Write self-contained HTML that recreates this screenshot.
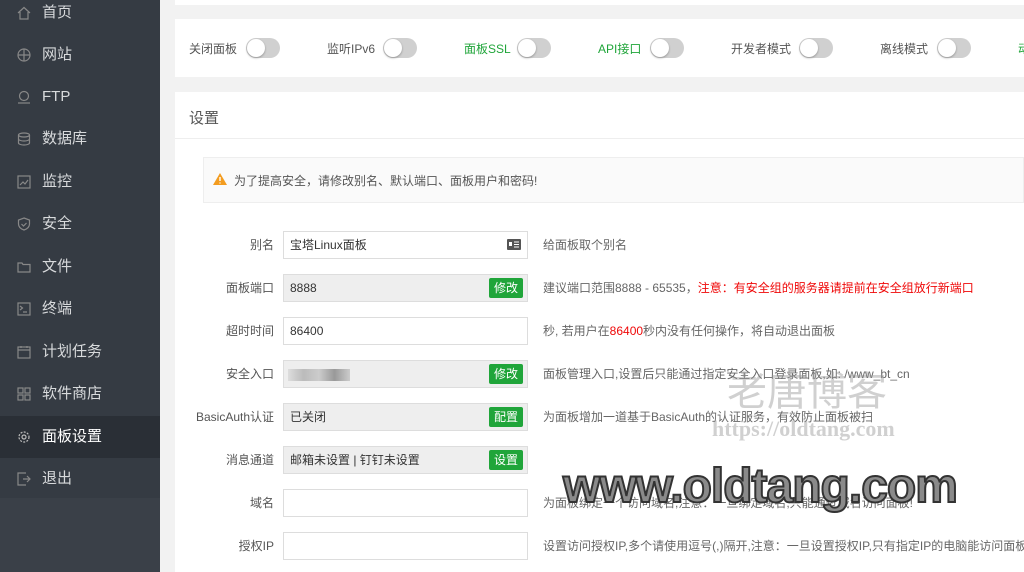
<!DOCTYPE html>
<html><head><meta charset="utf-8"><style>
*{margin:0;padding:0;box-sizing:border-box}
body{width:1024px;height:572px;overflow:hidden;background:#f2f2f2;font-family:"Liberation Sans","Noto Sans CJK SC",sans-serif;position:relative;font-size:12px;color:#555}
.side{position:absolute;left:0;top:0;width:160px;height:572px;background:#3a4048}
.side .menu{background:#353b43;height:498px}
.item{position:absolute;left:0;width:160px;height:42px;color:#d8dadc;font-size:15px;line-height:42px;padding-left:42px}
.item.act{background:#2a2f36;color:#fff}
.item svg{position:absolute;left:17px;top:14px;width:14px;height:14px}
.card{position:absolute;left:175px;right:0;background:#fff}
.tg{position:absolute;top:38px;width:34px;height:20px;border-radius:10px;background:#d0d0d0}
.tg:after{content:"";position:absolute;left:1px;top:1px;width:18px;height:18px;border-radius:50%;background:#fff;box-shadow:0 1px 2px rgba(0,0,0,.3)}
.tl{position:absolute;top:40px;font-size:12px;color:#555}
.g{color:#20a53a}
.lab{position:absolute;right:750px;font-size:12px;color:#555;text-align:right;width:120px}
.inp{position:absolute;left:283px;width:245px;height:28px;border:1px solid #ddd;background:#fff;font-size:12px;line-height:26px;padding-left:6px;color:#333}
.inp.dis{background:#eee}
.btn{position:absolute;right:4px;top:3px;height:20px;width:34px;background:#20a53a;color:#fff;border-radius:2px;font-size:12px;line-height:20px;text-align:center}
.desc{position:absolute;left:543px;font-size:12px;color:#666;white-space:nowrap}
.r{color:#ef0808}
</style></head><body>
<div class="side"><div class="menu"></div>
<div class="item" style="top:-8px">首页<svg viewBox="0 0 14 14" fill="none" stroke="#888" stroke-width="1.2"><path d="M1 7L7 1.5 13 7M3 6v7h8V6"/></svg></div>
<div class="item" style="top:34px">网站<svg viewBox="0 0 14 14" fill="none" stroke="#888" stroke-width="1.2"><circle cx="7" cy="7" r="6"/><path d="M1 7h12M7 1v12"/></svg></div>
<div class="item" style="top:76px">FTP<svg viewBox="0 0 14 14" fill="none" stroke="#888" stroke-width="1.2"><circle cx="7" cy="6" r="4.5"/><path d="M1 13h12"/></svg></div>
<div class="item" style="top:118px">数据库<svg viewBox="0 0 14 14" fill="none" stroke="#888" stroke-width="1.2"><ellipse cx="7" cy="3" rx="5.5" ry="2"/><path d="M1.5 3v8c0 1 2.5 2 5.5 2s5.5-1 5.5-2V3M1.5 7c0 1 2.5 2 5.5 2s5.5-1 5.5-2"/></svg></div>
<div class="item" style="top:161px">监控<svg viewBox="0 0 14 14" fill="none" stroke="#888" stroke-width="1.2"><rect x="1" y="1" width="12" height="12"/><path d="M3 10l3-3 2 2 3-4"/></svg></div>
<div class="item" style="top:203px">安全<svg viewBox="0 0 14 14" fill="none" stroke="#888" stroke-width="1.2"><path d="M7 1l5.5 2v4c0 3-2.5 5-5.5 6C4 12 1.5 10 1.5 7V3z"/><path d="M4.5 7l2 2 3-3"/></svg></div>
<div class="item" style="top:246px">文件<svg viewBox="0 0 14 14" fill="none" stroke="#888" stroke-width="1.2"><path d="M1 3h4l1 1.5h7V12H1z"/></svg></div>
<div class="item" style="top:288px">终端<svg viewBox="0 0 14 14" fill="none" stroke="#888" stroke-width="1.2"><rect x="1" y="1" width="12" height="12"/><path d="M3 4l2.5 2L3 8M6 10h4"/></svg></div>
<div class="item" style="top:331px">计划任务<svg viewBox="0 0 14 14" fill="none" stroke="#888" stroke-width="1.2"><rect x="1" y="2" width="12" height="11"/><path d="M1 5h12M4 1v2M10 1v2"/></svg></div>
<div class="item" style="top:373px">软件商店<svg viewBox="0 0 14 14" fill="none" stroke="#888" stroke-width="1.2"><rect x="1" y="1" width="5" height="5"/><rect x="8" y="1" width="5" height="5"/><rect x="1" y="8" width="5" height="5"/><rect x="8" y="8" width="5" height="5"/></svg></div>
<div class="item act" style="top:416px">面板设置<svg viewBox="0 0 14 14" fill="none" stroke="#bbb" stroke-width="1.2"><circle cx="7" cy="7" r="2"/><circle cx="7" cy="7" r="5" stroke-dasharray="2 1.3"/></svg></div>
<div class="item" style="top:458px">退出<svg viewBox="0 0 14 14" fill="none" stroke="#888" stroke-width="1.2"><path d="M9 1H1v12h8M6 7h7M10 4l3 3-3 3"/></svg></div>
</div>

<div class="card" style="top:-5px;height:10px"></div>
<div class="card" style="top:19px;height:58px">
<span class="tl" style="left:14px;top:21px">关闭面板</span><div class="tg" style="left:71px;top:19px"></div>
<span class="tl" style="left:152px;top:21px">监听IPv6</span><div class="tg" style="left:208px;top:19px"></div>
<span class="tl g" style="left:289px;top:21px">面板SSL</span><div class="tg" style="left:342px;top:19px"></div>
<span class="tl g" style="left:423px;top:21px">API接口</span><div class="tg" style="left:475px;top:19px"></div>
<span class="tl" style="left:556px;top:21px">开发者模式</span><div class="tg" style="left:624px;top:19px"></div>
<span class="tl" style="left:705px;top:21px">离线模式</span><div class="tg" style="left:762px;top:19px"></div>
<span class="tl g" style="left:843px;top:21px">动</span>
</div>
<div class="card" style="top:92px;height:480px">
<div style="position:absolute;left:14px;top:15px;font-size:15px;color:#555">设置</div>
<div style="position:absolute;left:0;right:0;top:46px;border-top:1px solid #eee"></div>
<div style="position:absolute;left:28px;right:0;top:65px;height:46px;background:#fafafa;border:1px solid #eee">
<svg style="position:absolute;left:9px;top:15px" width="14" height="12" viewBox="0 0 14 12"><path d="M7 0L14 12H0z" fill="#f39c1f"/><path d="M7 4v4M7 9.5v1" stroke="#fff" stroke-width="1.4"/></svg>
<span style="position:absolute;left:30px;top:14px;font-size:12px;color:#555">为了提高安全，请修改别名、默认端口、面板用户和密码!</span></div>
</div>

<div class="lab" style="top:236px">别名</div>
<div class="inp" style="top:231px">宝塔Linux面板<svg style="position:absolute;right:6px;top:7px" width="14" height="11" viewBox="0 0 14 11"><rect width="14" height="11" rx="1" fill="#555"/><rect x="2" y="3" width="3" height="4" fill="#fff"/><path d="M7 3h5M7 5.5h5M7 8h5" stroke="#fff"/></svg></div>
<div class="desc" style="top:236px">给面板取个别名</div>

<div class="lab" style="top:279px">面板端口</div>
<div class="inp dis" style="top:274px">8888<div class="btn">修改</div></div>
<div class="desc" style="top:279px">建议端口范围8888 - 65535，<span class="r">注意：有安全组的服务器请提前在安全组放行新端口</span></div>

<div class="lab" style="top:322px">超时时间</div>
<div class="inp" style="top:317px">86400</div>
<div class="desc" style="top:322px">秒, 若用户在<span class="r">86400</span>秒内没有任何操作，将自动退出面板</div>

<div class="lab" style="top:365px">安全入口</div>
<div class="inp dis" style="top:360px"><span style="position:absolute;left:4px;top:8px;width:62px;height:12px;background:linear-gradient(90deg,#ddd,#bbb,#ccc,#999,#ccc)"></span><div class="btn">修改</div></div>
<div class="desc" style="top:365px">面板管理入口,设置后只能通过指定安全入口登录面板,如: /www_bt_cn</div>

<div class="lab" style="top:408px">BasicAuth认证</div>
<div class="inp dis" style="top:403px">已关闭<div class="btn">配置</div></div>
<div class="desc" style="top:408px">为面板增加一道基于BasicAuth的认证服务，有效防止面板被扫</div>

<div class="lab" style="top:451px">消息通道</div>
<div class="inp dis" style="top:446px">邮箱未设置 | 钉钉未设置<div class="btn">设置</div></div>

<div class="lab" style="top:494px">域名</div>
<div class="inp" style="top:489px"></div>
<div class="desc" style="top:494px">为面板绑定一个访问域名,注意：一旦绑定域名,只能通过域名访问面板!</div>

<div class="lab" style="top:537px">授权IP</div>
<div class="inp" style="top:532px"></div>
<div class="desc" style="top:537px">设置访问授权IP,多个请使用逗号(,)隔开,注意：一旦设置授权IP,只有指定IP的电脑能访问面板!</div>

<div style="position:absolute;left:727px;top:368px;font-size:40px;color:rgba(150,150,150,.45);font-family:'Noto Sans CJK SC',sans-serif;line-height:1">老唐博客</div>
<div style="position:absolute;left:712px;top:416px;font-size:22px;font-weight:bold;color:rgba(150,150,150,.45);font-family:'Liberation Serif',serif">https://oldtang.com</div>
<div style="position:absolute;left:563px;top:463px;font-size:48px;font-weight:bold;color:#8a8a8a;-webkit-text-stroke:2px #333;letter-spacing:-1px;line-height:1">www.oldtang.com</div>
</body></html>
